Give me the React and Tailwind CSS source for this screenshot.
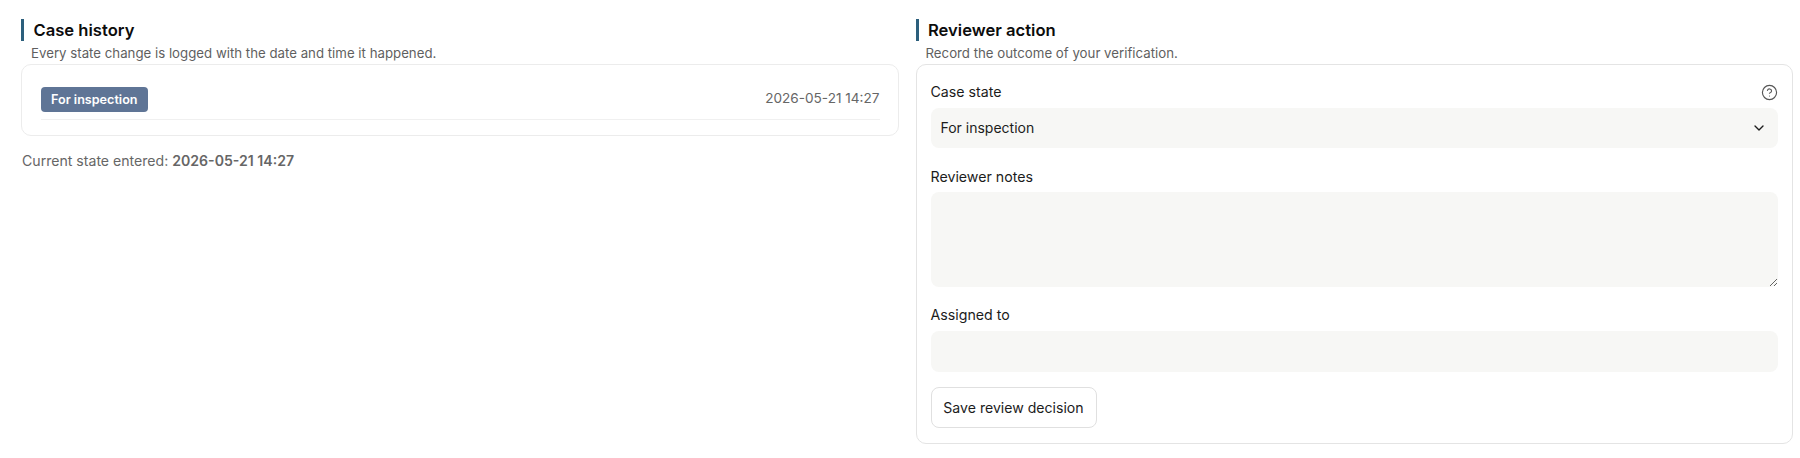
import React from "react";
import { ChevronDown, CircleHelp } from "lucide-react";

function Heading({ title, sub }) {
  return (
    <div>
      <div className="border-l-[3px] border-[#2c5f7c] pl-[9.5px] h-[22px] flex items-center">
        <h2 className="text-[16.6px] font-semibold leading-[22px] text-[#0c0c0c]">{title}</h2>
      </div>
      <p className="mt-[2px] pl-[10px] text-[13.25px] leading-[21px] text-[#5f5f5f]">{sub}</p>
    </div>
  );
}

function Label({ children }) {
  return <div className="text-[14.2px] leading-[20px] text-[#1c1c1c]">{children}</div>;
}

export default function App() {
  return (
    <div className="w-[1800px] h-[458px] bg-white font-['Inter',sans-serif] pl-[21px] pr-[7px] pt-[19px] grid grid-cols-2 gap-x-[17px] items-start">
      <section>
        <Heading title="Case history" sub="Every state change is logged with the date and time it happened." />
        <div className="h-[72px] rounded-[10px] border border-[#ececec] pl-[19px] pr-[18px] pt-[22px]">
          <div className="flex justify-between border-b border-[#f0f0f0] h-[33px]">
            <span className="h-[25px] rounded-[4px] bg-[#5f7596] px-[10px] text-[12.6px] font-semibold leading-[25px] text-white">For inspection</span>
            <span className="text-[13.6px] leading-[20px] text-[#666666] pt-[1px]">2026-05-21 14:27</span>
          </div>
        </div>
        <p className="mt-[14px] pl-px text-[14.1px] leading-[21px] text-[#666666]">
          Current state entered: <strong className="font-semibold">2026-05-21 14:27</strong>
        </p>
      </section>
      <section>
        <Heading title="Reviewer action" sub="Record the outcome of your verification." />
        <div className="h-[380px] rounded-[10px] border border-[#e4e4e4] px-[14px] pt-[17px]">
          <div className="flex items-center justify-between h-[20px]">
            <Label>Case state</Label>
            <CircleHelp size={17} strokeWidth={1.6} className="text-[#555555] mr-[0px]" />
          </div>
          <div className="relative mt-[6px] h-[40px]">
            <select className="h-full w-full appearance-none rounded-[8px] bg-[#f7f7f5] pl-[10px] pb-px text-[14px] text-[#1c1c1c] outline-none">
              <option>For inspection</option>
            </select>
            <ChevronDown size={16} strokeWidth={2} className="absolute right-[11px] top-[12px] text-[#1c1c1c] pointer-events-none" />
          </div>
          <div className="mt-[19px]">
            <Label>Reviewer notes</Label>
          </div>
          <textarea className="mt-[5px] block h-[95px] w-full rounded-[8px] bg-[#f7f7f5] outline-none resize-y" />
          <div className="mt-[18px]">
            <Label>Assigned to</Label>
          </div>
          <input className="mt-[6px] block h-[41px] w-full rounded-[8px] bg-[#f7f7f5] outline-none" />
          <button className="mt-[15px] block h-[41px] w-[166px] rounded-[8px] border border-[#e0e0e0] bg-white text-[14.1px] text-[#1c1c1c]">
            Save review decision
          </button>
        </div>
      </section>
    </div>
  );
}
